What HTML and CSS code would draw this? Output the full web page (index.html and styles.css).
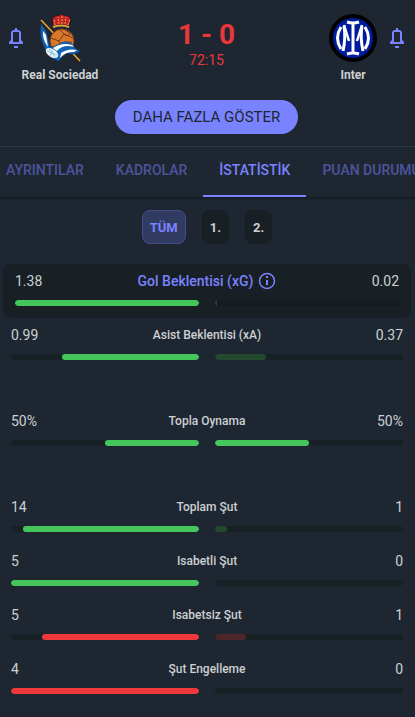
FILE: index.html
```
<!doctype html>
<html lang="tr">
  <head>
    <meta charset="utf-8">
    <meta name="viewport" content="width=device-width, initial-scale=1">
    <title>Real Sociedad - Inter</title>
    <link rel="stylesheet" href="styles.css">
  </head>
  <body>
    <header class="match">
      <div class="teams">
        <button class="bell" aria-label="Real Sociedad">
          <svg width="16" height="20" viewBox="0 0 16 20"><path d="M7 0h2v2h2l2 2v8l2 2v2H1v-2l2-2V4l2-2h2z M5 4v10h6V4z" fill-rule="evenodd"/><path d="M6 18h4v2H6z"/></svg>
        </button>
        <div class="team">
          <svg width="48" height="48" viewBox="0 0 48 48">
            <path d="M17 12L16 5l3-3 5-1 2-1 1 1 5 1 3 3-2 7q-8-3-16 0z" fill="#c6202b" stroke="#2b1719"/>
            <path d="M19 11l-1-6m5 5l-1-7m4 7V2m3 8l1-7m2 8l2-6" stroke="#e3a63a" stroke-dasharray="2 1" fill="none"/>
            <path d="M17 13q8-3 16 0" stroke="#e3a63a" stroke-width="2" fill="none"/>
            <path d="M5 6l39 41" stroke="#302316" stroke-width="3"/>
            <path d="M5 6l39 41" stroke="#e2aa42" stroke-width="1.5"/>
            <circle cx="26" cy="27" r="12" fill="#d97827" stroke="#6d3920"/>
            <path d="M15 24l8 3 4 8m-4-8l5-7-5-5m5 5l9 4M27 29l9-1m-7-12l5 3-2 3-5-2" fill="none" stroke="#743b20"/>
            <path d="M5 10l5 7 4 16q5 0 9-3 6-4 12-1 2 5 9 8-6 5-12 2-6 2-9 8Q12 44 9 34 3 24 5 10z" fill="#1263b4" stroke="#163e6c" stroke-width=".5"/>
            <path d="M7 17q-1 8 5 16l-2-12zM17 34q9-6 19-3l2 2q-11-3-17 4zM25 39q7-5 16-3l-3 2q-8-1-14 6z" fill="#fff"/>
            <ellipse cx="16" cy="39" rx="7" ry="4" transform="rotate(32 16 39)" fill="#e7f3f6"/>
            <path d="M11 37l10 4m-8-6l6 8m-2-7l-3 6" stroke="#6db0cd" stroke-width=".7"/>
          </svg>
          <span>Real Sociedad</span>
        </div>
        <div class="result">
          <strong>1 - 0</strong>
          <span>72:15</span>
        </div>
        <div class="team">
          <svg width="48" height="48" viewBox="0 0 48 48">
            <circle cx="24" cy="24" r="24" fill="#000"/>
            <circle cx="24" cy="24" r="20" fill="#001b9c"/>
            <g fill="none" stroke="#fff" stroke-width="3">
              <path d="M18 8q6 2 12 0M24 9v30M18 40q6-2 12 0"/>
              <path d="M12 13q-7 11 0 22M36 13q7 11 0 22"/>
              <path d="M15 12q2 12-1 25M33 12q-2 12 1 25"/>
              <path d="M15 11l5 16M33 11l-5 16" stroke-width="2.5"/>
            </g>
          </svg>
          <span>Inter</span>
        </div>
        <button class="bell" aria-label="Inter">
          <svg width="16" height="20" viewBox="0 0 16 20"><path d="M7 0h2v2h2l2 2v8l2 2v2H1v-2l2-2V4l2-2h2z M5 4v10h6V4z" fill-rule="evenodd"/><path d="M6 18h4v2H6z"/></svg>
        </button>
      </div>
      <button class="more">DAHA FAZLA GÖSTER</button>
    </header>

    <nav class="tabs">
      <a href="#">AYRINTILAR</a>
      <a href="#">KADROLAR</a>
      <a href="#" class="active">İSTATİSTİK</a>
      <a href="#">PUAN DURUMU</a>
    </nav>

    <main>
      <div class="periods">
        <button class="selected">TÜM</button>
        <button>1.</button>
        <button>2.</button>
      </div>

      <section class="group">
        <div class="stat featured">
          <div class="values">
            <span>1.38</span>
            <span class="label">Gol Beklentisi (xG)
              <svg width="18" height="18" viewBox="0 0 18 18"><circle cx="9" cy="9" r="7.5" fill="none" stroke="currentColor" stroke-width="1.5"/><path d="M8 4h2v2H8zM8 8h2v5H8z" fill="currentColor"/></svg>
            </span>
            <span>0.02</span>
          </div>
          <div class="bars">
            <div class="bar home"><i style="width: 100%"></i></div>
            <div class="bar away"><i class="dim" style="width: 1%"></i></div>
          </div>
        </div>
        <div class="stat">
          <div class="values"><span>0.99</span><span class="label">Asist Beklentisi (xA)</span><span>0.37</span></div>
          <div class="bars">
            <div class="bar home"><i style="width: 73%"></i></div>
            <div class="bar away"><i class="dim" style="width: 27%"></i></div>
          </div>
        </div>
      </section>

      <section class="group">
        <div class="stat">
          <div class="values"><span>50%</span><span class="label">Topla Oynama</span><span>50%</span></div>
          <div class="bars">
            <div class="bar home"><i style="width: 50%"></i></div>
            <div class="bar away"><i style="width: 50%"></i></div>
          </div>
        </div>
      </section>

      <section class="group">
        <div class="stat">
          <div class="values"><span>14</span><span class="label">Toplam Şut</span><span>1</span></div>
          <div class="bars">
            <div class="bar home"><i style="width: 93.5%"></i></div>
            <div class="bar away"><i class="dim" style="width: 6.5%"></i></div>
          </div>
        </div>
        <div class="stat">
          <div class="values"><span>5</span><span class="label">Isabetli Şut</span><span>0</span></div>
          <div class="bars">
            <div class="bar home"><i style="width: 100%"></i></div>
            <div class="bar away"></div>
          </div>
        </div>
        <div class="stat negative">
          <div class="values"><span>5</span><span class="label">Isabetsiz Şut</span><span>1</span></div>
          <div class="bars">
            <div class="bar home"><i style="width: 83.5%"></i></div>
            <div class="bar away"><i class="dim" style="width: 16.5%"></i></div>
          </div>
        </div>
        <div class="stat negative">
          <div class="values"><span>4</span><span class="label">Şut Engelleme</span><span>0</span></div>
          <div class="bars">
            <div class="bar home"><i style="width: 100%"></i></div>
            <div class="bar away"></div>
          </div>
        </div>
      </section>
    </main>
  </body>
</html>
```
FILE: styles.css
```
* {
  box-sizing: border-box;
}

body {
  margin: 0;
  background: #1e2731;
  color: #cdd0d3;
  font-family: Roboto, "Liberation Sans", sans-serif;
  font-size: 14px;
  overflow-x: hidden;
}

button {
  font-family: inherit;
  border: none;
  padding: 0;
}

.match {
  padding: 14px 10px 12px 8px;
  border-bottom: 1px solid #38404c;
  text-align: center;
}

.teams {
  display: flex;
  align-items: flex-start;
  margin-bottom: 12px;
}

.bell {
  background: none;
  width: 16px;
  height: 20px;
  margin-top: 14px;
}

.bell svg {
  display: block;
  fill: #7a83ff;
}

.team {
  width: 88px;
  margin: 0 -8px;
  font-size: 12px;
  font-weight: bold;
  line-height: 26px;
  white-space: nowrap;
}

.team svg,
.team span {
  display: block;
  margin: 0 auto;
}

.result {
  flex: 1;
  color: #ea373b;
}

.result strong {
  display: block;
  font-size: 28px;
  line-height: 32px;
  margin-top: 5px;
}

.result span {
  line-height: 18px;
}

.more {
  background: #7a83ff;
  color: #1e2731;
  height: 34px;
  padding: 0 18px;
  border-radius: 17px;
  font-size: 15px;
}

.tabs {
  display: flex;
  height: 50px;
  margin-left: -10px;
  overflow: hidden;
  box-shadow: 0 1px 3px #10171d;
}

.tabs a {
  flex: none;
  padding: 0 16px;
  border-bottom: 2px solid transparent;
  color: #4d549d;
  font-weight: 500;
  line-height: 46px;
  text-decoration: none;
}

.tabs .active {
  color: #7a83ff;
  border-color: #7a83ff;
}

main {
  padding: 13px 4px 12px 3px;
}

.periods {
  display: flex;
  justify-content: center;
  gap: 16px;
  margin-bottom: 20px;
}

.periods button {
  height: 34px;
  padding: 0 7px;
  border: 1px solid #151c22;
  border-radius: 8px;
  background: #182026;
  color: #cdd0d3;
  font-size: 13px;
  font-weight: bold;
}

.periods .selected {
  background: #313b62;
  border-color: #454e87;
  color: #7a83ff;
}

.group {
  margin-bottom: 32px;
}

.stat {
  height: 54px;
  padding: 8px 8px 12px;
}

.featured {
  padding: 8px 12px 12px;
  background: #182026;
  border-radius: 8px;
}

.values {
  display: grid;
  grid-template-columns: 1fr auto 1fr;
  line-height: 18px;
  margin-bottom: 10px;
}

.values span:last-child {
  text-align: right;
}

.label {
  font-size: 12px;
  font-weight: 500;
}

.featured .label {
  display: flex;
  gap: 5px;
  color: #7a83ff;
  font-size: 14px;
}

.bars {
  display: grid;
  grid-template-columns: 1fr 1fr;
  gap: 16px;
}

.bar {
  display: flex;
  height: 6px;
  border-radius: 3px;
  overflow: hidden;
  background: #182125;
}

.featured .bar {
  background: #151b20;
}

.home {
  justify-content: flex-end;
}

.bar i {
  background: #45c65b;
  border-radius: 3px;
}

.bar .dim {
  background: #23492f;
}

.negative .bar i {
  background: #ee383b;
}

.negative .bar .dim {
  background: #4f252c;
}
```
